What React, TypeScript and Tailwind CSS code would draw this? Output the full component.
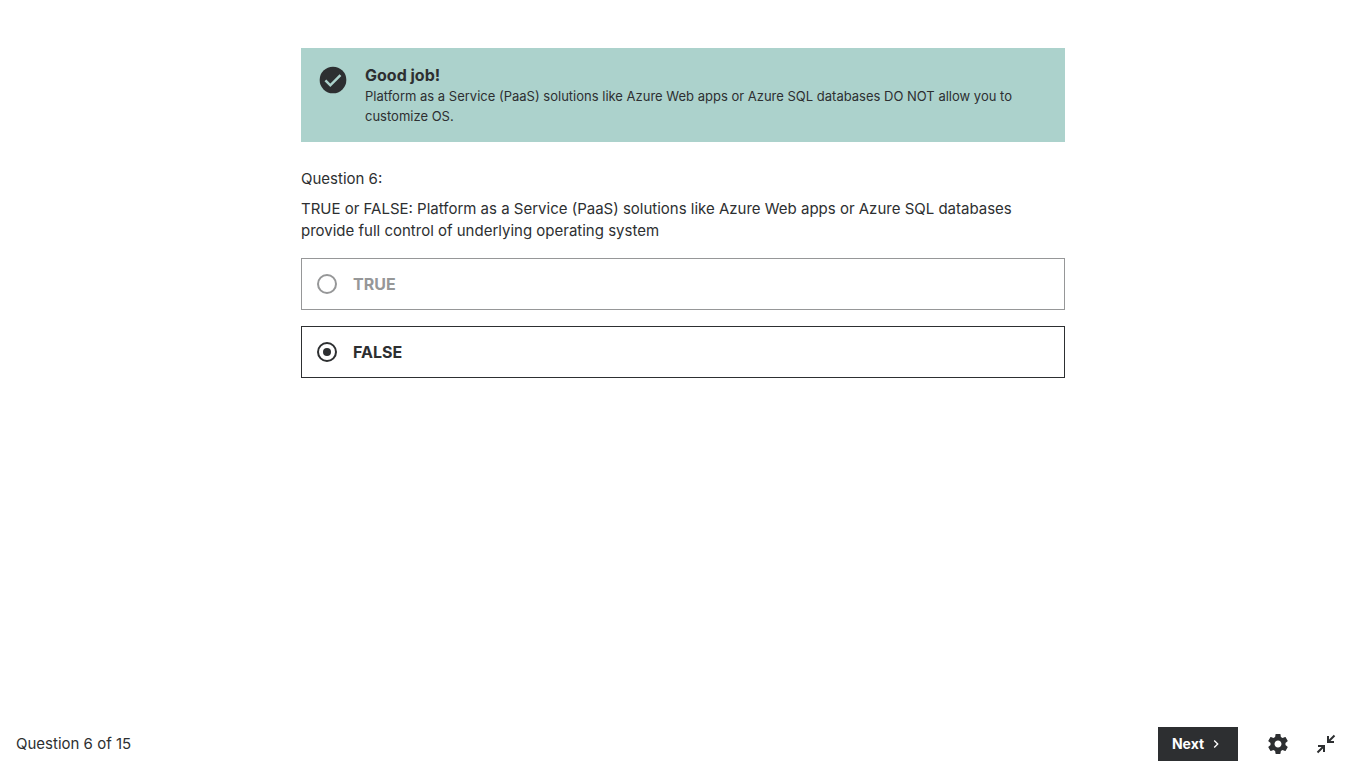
import { useState } from "react";

const answers = ["TRUE", "FALSE"];

function CheckCircleIcon() {
  return (
    <svg viewBox="0 0 24 24" className="size-8 shrink-0" aria-hidden="true">
      <circle cx="12" cy="12" r="10" fill="currentColor" />
      <path d="M6.3 12.3l3.7 3.7 7.6-7.6" fill="none" stroke="#acd2cc" strokeWidth="1.9" />
    </svg>
  );
}

function ChevronIcon() {
  return (
    <svg viewBox="0 0 24 24" className="size-4 fill-current" aria-hidden="true">
      <path d="M10 6L8.59 7.41 13.17 12l-4.58 4.59L10 18l6-6z" />
    </svg>
  );
}

function SettingsIcon() {
  return (
    <svg viewBox="0 0 24 24" className="size-6 fill-current" aria-hidden="true">
      <path d="M19.43 12.98c.04-.32.07-.64.07-.98s-.03-.66-.07-.98l2.11-1.65c.19-.15.24-.42.12-.64l-2-3.46c-.12-.22-.39-.3-.61-.22l-2.49 1c-.52-.4-1.08-.73-1.69-.98l-.38-2.65C14.46 2.18 14.25 2 14 2h-4c-.25 0-.46.18-.49.42l-.38 2.65c-.61.25-1.17.59-1.69.98l-2.49-1c-.23-.09-.49 0-.61.22l-2 3.46c-.13.22-.07.49.12.64l2.11 1.65c-.04.32-.07.65-.07.98s.03.66.07.98l-2.11 1.65c-.19.15-.24.42-.12.64l2 3.46c.12.22.39.3.61.22l2.49-1c.52.4 1.08.73 1.69.98l.38 2.65c.03.24.24.42.49.42h4c.25 0 .46-.18.49-.42l.38-2.65c.61-.25 1.17-.59 1.69-.98l2.49 1c.23.09.49 0 .61-.22l2-3.46c.12-.22.07-.49-.12-.64l-2.11-1.65zM12 15.5c-1.93 0-3.5-1.57-3.5-3.5s1.57-3.5 3.5-3.5 3.5 1.57 3.5 3.5-1.57 3.5-3.5 3.5z" />
    </svg>
  );
}

function CollapseIcon() {
  return (
    <svg viewBox="0 0 24 24" className="size-6 fill-none stroke-current stroke-2" aria-hidden="true">
      <path d="M14 4v6h6M14 10l6.5-6.5M4 14h6v6M10 14l-6.5 6.5" />
    </svg>
  );
}

export default function App() {
  const [selected, setSelected] = useState("FALSE");

  return (
    <div className="flex min-h-screen flex-col bg-white font-['Inter','Liberation_Sans',sans-serif] text-[15px] leading-[22px] text-[#2d2f31]">
      <main className="mx-auto w-full max-w-[764px] grow pt-12">
        <section role="status" className="flex gap-4 bg-[#acd2cc] px-4 pt-4 pb-4">
          <CheckCircleIcon />
          <div className="flex flex-col">
            <h2 className="text-base leading-[22px] font-bold">Good job!</h2>
            <p className="text-[13px] leading-5">
              Platform as a Service (PaaS) solutions like Azure Web apps or Azure SQL databases DO NOT allow you to customize OS.
            </p>
          </div>
        </section>

        <form className="pt-[26px]">
          <p>Question 6:</p>
          <p id="prompt" className="mt-2">
            TRUE or FALSE: Platform as a Service (PaaS) solutions like Azure Web apps or Azure SQL databases provide full control of underlying operating system
          </p>
          <div role="radiogroup" aria-labelledby="prompt" className="mt-4 flex flex-col gap-4">
            {answers.map((answer) => (
              <label
                key={answer}
                className="flex h-[52px] items-center gap-4 border border-[#969798] px-[15px] text-base font-bold text-[#969798] has-checked:border-[#2d2f31] has-checked:text-[#2d2f31]"
              >
                <input
                  type="radio"
                  name="answer"
                  value={answer}
                  checked={selected === answer}
                  onChange={() => setSelected(answer)}
                  className="grid size-5 shrink-0 appearance-none place-items-center rounded-full border-2 border-current before:size-2 before:rounded-full checked:before:bg-current"
                />
                {answer}
              </label>
            ))}
          </div>
        </form>
      </main>

      <footer className="flex h-12 items-center justify-between px-4">
        <span>Question 6 of 15</span>
        <div className="flex items-center">
          <button type="button" className="mr-4 flex h-[34px] w-20 items-center justify-center gap-1 bg-[#2d2f31] text-sm font-bold text-white">
            Next
            <ChevronIcon />
          </button>
          <button type="button" aria-label="Settings" className="grid size-12 place-items-center">
            <SettingsIcon />
          </button>
          <button type="button" aria-label="Exit expanded view" className="grid size-12 place-items-center">
            <CollapseIcon />
          </button>
        </div>
      </footer>
    </div>
  );
}
